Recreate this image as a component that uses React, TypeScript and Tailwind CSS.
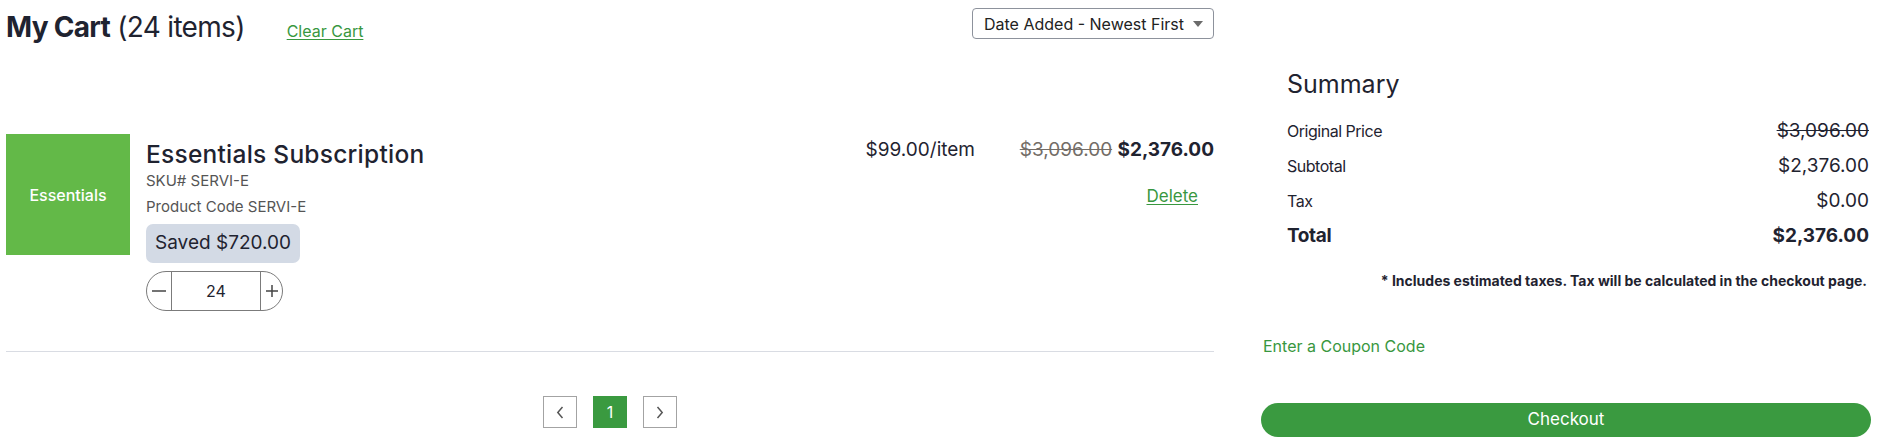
import React from "react";

function Caret() {
  return (
    <svg width="10" height="6" viewBox="0 0 10 6" className="shrink-0">
      <path d="M0 0 L10 0 L5 6 Z" fill="#6b6b6b" />
    </svg>
  );
}

function Chevron({ dir }: { dir: "left" | "right" }) {
  return (
    <svg width="8" height="13" viewBox="0 0 8 13">
      {dir === "left" ? (
        <path d="M6.5 1 L1.8 6.5 L6.5 12" fill="none" stroke="#555" strokeWidth="1.5" />
      ) : (
        <path d="M1.5 1 L6.2 6.5 L1.5 12" fill="none" stroke="#555" strokeWidth="1.5" />
      )}
    </svg>
  );
}

export default function App() {
  return (
    <div className="w-[1883px] h-[445px] bg-white text-[#1f2330] [font-family:Inter,'Noto_Sans',sans-serif] flex pl-[6px] gap-[47px] overflow-hidden">
      {/* Left column */}
      <div className="w-[1208px] flex flex-col">
        <div className="flex items-start justify-between pt-[8px]">
          <div className="flex items-baseline mt-[1px]">
            <h1 className="text-[28px] leading-[36px] tracking-[-0.025em]">
              <span className="font-bold">My Cart</span> (24 items)
            </h1>
            <a className="ml-[42px] text-[16px] leading-[24px] text-[#38973f] underline underline-offset-2">
              Clear Cart
            </a>
          </div>
          <div className="w-[242px] h-[31px] border border-[#8d929c] rounded-[4px] flex items-center justify-between pl-[11px] pr-[10px] text-[16px] text-[#222]">
            <span>Date Added - Newest First</span>
            <Caret />
          </div>
        </div>

        <div className="mt-[89px] flex items-start border-b border-[#d9dce3] pb-[40px]">
          <div className="w-[124px] h-[121px] bg-[#63b948] text-white text-[16px] font-medium flex items-center justify-center shrink-0">
            Essentials
          </div>
          <div className="ml-[16px] flex-1 flex flex-col pt-[6px]">
            <div className="text-[24.5px] leading-[28px] font-medium tracking-[0.01em]">Essentials Subscription</div>
            <div className="mt-[1px] text-[15px] leading-[24px] text-[#555]">SKU# SERVI-E</div>
            <div className="mt-[2px] text-[15px] leading-[24px] text-[#555]">Product Code SERVI-E</div>
            <div className="mt-[5px] h-[39px] w-fit px-[9px] rounded-[7px] bg-[#d3dae5] text-[19px] flex items-center">
              Saved $720.00
            </div>
            <div className="mt-[8px] flex h-[40px] w-[137px] border border-[#7b7b7b] rounded-full overflow-hidden">
              <div className="w-[25px] border-r border-[#7b7b7b] flex items-center justify-center">
                <svg width="14" height="2" viewBox="0 0 14 2">
                  <path d="M0 1 H14" stroke="#444" strokeWidth="1.5" />
                </svg>
              </div>
              <div className="w-[88px] flex items-center justify-center text-[16px]">24</div>
              <div className="flex-1 border-l border-[#7b7b7b] flex items-center justify-center">
                <svg width="12" height="12" viewBox="0 0 12 12">
                  <path d="M0 6 H12 M6 0 V12" stroke="#444" strokeWidth="1.5" />
                </svg>
              </div>
            </div>
          </div>
          <div className="pt-[2px] text-[19px] leading-[28px]">$99.00/item</div>
          <div className="w-[239px] flex flex-col items-end pt-[2px]">
            <div className="text-[19px] leading-[28px]">
              <span className="line-through text-[#736d67]">$3,096.00</span>{" "}
              <span className="font-bold">$2,376.00</span>
            </div>
            <a className="mt-[20px] mr-[16px] text-[17px] leading-[24px] text-[#38973f] underline underline-offset-2">
              Delete
            </a>
          </div>
        </div>

        <div className="mt-[44px] flex justify-center gap-[16px]">
          <div className="w-[34px] h-[32px] border border-[#a3a3a3] flex items-center justify-center">
            <Chevron dir="left" />
          </div>
          <div className="w-[34px] h-[32px] bg-[#3a9a40] text-white text-[16px] flex items-center justify-center">
            1
          </div>
          <div className="w-[34px] h-[32px] border border-[#a3a3a3] flex items-center justify-center">
            <Chevron dir="right" />
          </div>
        </div>
      </div>

      {/* Right column */}
      <div className="w-[610px] flex flex-col pt-[68px]">
        <div className="pl-[26px] pr-[2px]">
          <div className="text-[25px] leading-[32px]">Summary</div>
          <div className="mt-[13px] flex flex-col">
            <div className="h-[35px] flex justify-between items-baseline leading-[35px]">
              <span className="text-[16px] tracking-[-0.03em]">Original Price</span>
              <span className="text-[19px] line-through">$3,096.00</span>
            </div>
            <div className="h-[35px] flex justify-between items-baseline leading-[35px]">
              <span className="text-[16px] tracking-[-0.03em]">Subtotal</span>
              <span className="text-[19px]">$2,376.00</span>
            </div>
            <div className="h-[35px] flex justify-between items-baseline leading-[35px]">
              <span className="text-[16px] tracking-[-0.03em]">Tax</span>
              <span className="text-[19px]">$0.00</span>
            </div>
            <div className="h-[35px] flex justify-between items-baseline leading-[35px]">
              <span className="text-[19px] font-bold tracking-[-0.02em]">Total</span>
              <span className="text-[19px] font-bold">$2,376.00</span>
            </div>
          </div>
          <div className="mt-[18px] pr-[2px] text-right text-[14px] leading-[20px] font-bold">
            * Includes estimated taxes. Tax will be calculated in the checkout page.
          </div>
        </div>
        <a className="mt-[43px] pl-[2px] text-[16px] leading-[24px] text-[#38973f]">Enter a Coupon Code</a>
        <button className="mt-[45px] h-[34px] w-full rounded-full bg-[#3a9a40] text-white text-[17px] flex items-center justify-center">
          Checkout
        </button>
      </div>
    </div>
  );
}
